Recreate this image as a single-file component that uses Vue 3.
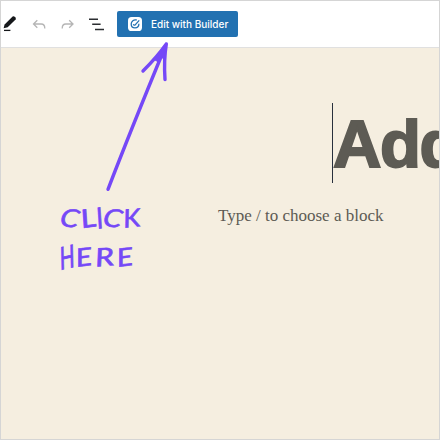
<script setup>
const lines = [
  { id: 'click', letters: ['C', 'L', 'I', 'C', 'K'] },
  { id: 'here', letters: ['H', 'E', 'R', 'E'] },
]
</script>

<template>
  <div class="editor">
    <header class="toolbar">
      <svg class="tools" viewBox="0 0 112 45" aria-hidden="true">
        <path d="M4.6 22.4 12.6 14.4Q14 13.9 15.2 15.2Q16.3 16.4 15.6 17.4L7.7 25.2 3.6 26.2Z" fill="#15171a" />
        <path d="M4 28.4H10.4" stroke="#15171a" stroke-width="1.3" />
        <g fill="none" stroke="#b5b5b5" stroke-width="1.3">
          <path d="M37.3 18.3 33.5 22 37.3 25.7M33.8 22H41.2Q44.8 22 44.8 26.4" />
          <path d="M69.2 18.3 73 22 69.2 25.7M72.7 22H65.8Q62.2 22 62.2 26.4" />
        </g>
        <path d="M89 17.2H98M92.2 22.3H100.6M95 27.4H104" fill="none" stroke="#2b2d30" stroke-width="1.5" />
      </svg>
      <button class="builder">
        <svg class="logo" viewBox="0 0 14 14" aria-hidden="true">
          <rect width="14" height="14" rx="3.6" fill="#fff" />
          <path d="M8.7 3C5.7 2.2 3.2 4.3 3.2 7c0 2.3 1.6 3.9 3.8 3.9 2.3 0 3.9-1.8 3.9-4.1M5.3 7.2Q6.2 9 7.4 7.6L11.2 3.4" fill="none" stroke="#2271b1" stroke-width="1.3" />
        </svg>
        <span>Edit with Builder</span>
      </button>
    </header>
    <main class="canvas">
      <h1 class="title">Add</h1>
      <div class="row">
        <div class="note">
          <div v-for="line in lines" :key="line.id" :class="['line', line.id]">
            <span v-for="(c, i) in line.letters" :key="i" :class="['cell', 'cell-' + c]"><span class="glyph">{{ c }}</span></span>
          </div>
        </div>
        <p class="prompt">Type / to choose a block</p>
      </div>
    </main>
    <svg class="arrow" viewBox="0 0 440 440" aria-hidden="true">
      <path d="M108 189.3Q130 132 166.3 44Q157 57 143 71M166.3 44Q163.7 60 165 79.5" />
      <path d="M165.8 45.5 155 60 158.5 62 161.5 56 164 60Z" fill="#7548f7" stroke-width="1" />
    </svg>
  </div>
</template>

<style>
body { margin: 0; }
</style>

<style scoped>
.editor {
  position: relative;
  box-sizing: border-box;
  width: 440px;
  height: 440px;
  overflow: hidden;
  border: 1px solid #d5d5d5;
  background: #f5eee0;
}
.toolbar {
  display: flex;
  align-items: center;
  box-sizing: border-box;
  height: 47px;
  border-bottom: 1px solid #e0e0e0;
  background: #fff;
}
.tools {
  flex: none;
  width: 112px;
  height: 45px;
  margin-left: -1px;
}
.builder {
  display: flex;
  align-items: center;
  gap: 9px;
  box-sizing: border-box;
  width: 121px;
  height: 26px;
  margin: 0 0 0 5px;
  padding: 0 0 0 11px;
  border: 0;
  border-radius: 2px;
  background: #2271b1;
  color: #fff;
  font: 500 10px/26px Inter, sans-serif;
  white-space: nowrap;
}
.logo {
  flex: none;
  width: 14px;
  height: 14px;
}
.canvas {
  padding-top: 55px;
}
.title {
  height: 80px;
  margin: 0 0 0 331px;
  border-left: 1px solid #28303d;
  color: #5d5b54;
  font: 700 67px/82px "Liberation Sans", sans-serif;
  letter-spacing: -1.4px;
  white-space: nowrap;
  -webkit-text-stroke: 2px #5d5b54;
}
.row {
  display: flex;
  padding: 15px 0 0 58px;
}
.note {
  width: 159px;
  color: #7548f7;
  font: italic 400 25px/38px Lato, sans-serif;
  -webkit-text-stroke: 0.6px #7548f7;
}
.line {
  display: flex;
  height: 39px;
}
.cell {
  display: flex;
  justify-content: center;
}
.glyph {
  display: block;
}
.cell-C { width: 21px; }
.cell-L { width: 16px; }
.cell-I { width: 6px; }
.cell-K { width: 18px; }
.cell-H { width: 16px; }
.cell-E { width: 18px; }
.cell-R { width: 23px; }
.cell-C .glyph { transform: scaleX(1.2) rotate(8deg); }
.cell-L .glyph { transform: scaleX(1.3) rotate(-10deg); }
.cell-I .glyph { transform: rotate(-10deg) scaleY(1.15); }
.cell-K .glyph { transform: scaleX(1.1) rotate(-6deg); }
.cell-H .glyph { transform: scale(0.85, 1.25) rotate(-9deg); }
.cell-E .glyph { transform: scaleX(1.2) rotate(-7deg); }
.cell-R .glyph { transform: scaleX(1.3) rotate(-5deg); }
.prompt {
  margin: 6px 0 0;
  color: #5d5b54;
  font: 400 17px/24px "Liberation Serif", serif;
  white-space: nowrap;
}
.arrow {
  position: absolute;
  left: -1px;
  top: -1px;
  width: 440px;
  height: 440px;
  fill: none;
  stroke: #7548f7;
  stroke-width: 3.4;
  stroke-linecap: round;
  stroke-linejoin: round;
}
</style>
